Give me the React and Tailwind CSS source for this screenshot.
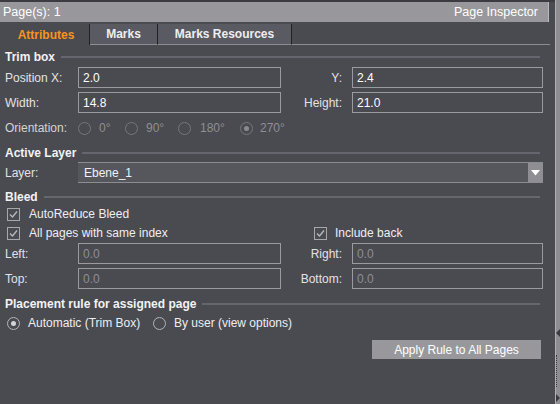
import React from "react";

function Heading({ children, className = "" }) {
  return (
    <div className={`flex items-center gap-[6px] pl-[5px] pr-[15px] h-[14px] ${className}`}>
      <span className="font-bold text-[#f2f2f5] whitespace-nowrap">{children}</span>
      <div className="flex-1 h-[2px] bg-[#66666e]" />
    </div>
  );
}

function Field({ value, dim = false }) {
  return (
    <div
      className={`h-[21px] border border-[#9b9b9f] flex items-center pl-[4px] ${
        dim ? "text-[#8e8e94]" : "text-white"
      }`}
    >
      {value}
    </div>
  );
}

function Radio({ checked = false, disabled = false }) {
  return (
    <span
      className={`w-[13px] h-[13px] rounded-full border flex items-center justify-center shrink-0 ${
        disabled ? "border-[#76767d]" : "border-[#b4b4b8]"
      }`}
    >
      {checked && (
        <span
          className={`w-[5px] h-[5px] rounded-full ${disabled ? "bg-[#8a8a90]" : "bg-[#d4d4d8]"}`}
        />
      )}
    </span>
  );
}

function Check() {
  return (
    <span className="w-[13px] h-[13px] border border-[#a8a8ac] flex items-center justify-center shrink-0">
      <svg width="9" height="9" viewBox="0 0 9 9">
        <path d="M1 4.5 L3.5 7 L8 1.5" fill="none" stroke="#b8b8bc" strokeWidth="1.4" />
      </svg>
    </span>
  );
}

function FieldRow({ l1, v1, l2, v2, dim, className = "" }) {
  return (
    <div className={`flex items-center h-[21px] pl-[5px] ${className}`}>
      <span className="w-[73px] text-[#e2e2e6]">{l1}</span>
      <div className="w-[203px]">
        <Field value={v1} dim={dim} />
      </div>
      <span className="w-[61px] text-right text-[#e2e2e6]">{l2}</span>
      <div className="w-[191px] ml-[10px]">
        <Field value={v2} dim={dim} />
      </div>
    </div>
  );
}

export default function App() {
  return (
    <div className="w-[560px] h-[404px] flex bg-[#4a4a51] font-['Liberation_Sans',Arial,sans-serif] text-[12px] leading-none overflow-hidden">
      <div className="w-[555px] flex flex-col">
        <div className="h-[22px] border-t-2 border-[#3b3b41] flex">
          <div className="w-[549px] bg-[#98989c] border-r border-[#b8b8bc] flex items-center justify-between pl-[3px] pr-[10px] text-white text-[12.5px]">
            <span>Page(s): 1</span>
            <span>Page Inspector</span>
          </div>
        </div>

        <div className="h-[23px] flex items-end pt-[2px]">
          <div className="w-[90px] h-full flex items-center justify-center font-bold text-[#f7941d] border-r border-[#222226] pl-[3px]">
            Attributes
          </div>
          <div className="w-[68px] h-full flex items-center justify-center font-bold text-[#eeeef2] bg-[#5a5a62] border-r border-[#222226] border-b border-b-[#8c8c92]">
            Marks
          </div>
          <div className="w-[134px] h-full flex items-center justify-center font-bold text-[#eeeef2] bg-[#5a5a62] border-r border-[#222226] border-b border-b-[#8c8c92]">
            Marks Resources
          </div>
          <div className="w-[258px] h-full border-b border-[#8c8c92]" />
        </div>

        <Heading className="mt-[5px]">Trim box</Heading>
        <FieldRow l1="Position X:" v1="2.0" l2="Y:" v2="2.4" className="mt-[3px]" />
        <FieldRow l1="Width:" v1="14.8" l2="Height:" v2="21.0" className="mt-[4px]" />

        <div className="flex items-center h-[14px] mt-[8px] pl-[5px] text-[#8e8e94]">
          <span className="w-[73px] text-[#d4d4d8]">Orientation:</span>
          <span className="flex items-center gap-[8px] w-[47px]">
            <Radio disabled />0°
          </span>
          <span className="flex items-center gap-[8px] w-[53px]">
            <Radio disabled />90°
          </span>
          <span className="flex items-center gap-[9px] w-[62px]">
            <Radio disabled />180°
          </span>
          <span className="flex items-center gap-[7px]">
            <Radio disabled checked />270°
          </span>
        </div>

        <Heading className="mt-[11px]">Active Layer</Heading>
        <div className="flex items-center h-[21px] pl-[5px] mt-[2px]">
          <span className="w-[73px] text-[#e2e2e6]">Layer:</span>
          <div className="w-[465px] h-[21px] flex bg-[#56565d] border-y border-[#8c8c92]">
            <span className="flex-1 flex items-center pl-[6px] text-[#f2f2f5]">Ebene_1</span>
            <span className="w-[15px] bg-[#8e8e93] flex items-center justify-center">
              <svg width="9" height="6" viewBox="0 0 9 6">
                <path d="M0 0 H9 L4.5 5.5 Z" fill="#ffffff" />
              </svg>
            </span>
          </div>
        </div>

        <Heading className="mt-[7px]">Bleed</Heading>
        <div className="flex items-center gap-[9px] h-[14px] pl-[7px] mt-[3px] text-[#eeeef2]">
          <Check />
          AutoReduce Bleed
        </div>
        <div className="flex items-center h-[14px] pl-[7px] mt-[5px] text-[#eeeef2]">
          <span className="w-[307px] flex items-center gap-[9px]">
            <Check />
            All pages with same index
          </span>
          <span className="flex items-center gap-[8px]">
            <Check />
            Include back
          </span>
        </div>
        <FieldRow l1="Left:" v1="0.0" l2="Right:" v2="0.0" dim className="mt-[3px]" />
        <FieldRow l1="Top:" v1="0.0" l2="Bottom:" v2="0.0" dim className="mt-[4px]" />

        <Heading className="mt-[8px]">Placement rule for assigned page</Heading>
        <div className="flex items-center h-[14px] pl-[7px] mt-[5px] text-[#eeeef2]">
          <span className="w-[146px] flex items-center gap-[8px]">
            <Radio checked />
            Automatic (Trim Box)
          </span>
          <span className="flex items-center gap-[8px]">
            <Radio />
            By user (view options)
          </span>
        </div>

        <div className="flex justify-end pr-[14px] mt-[10px]">
          <button className="w-[169px] h-[19px] bg-[#98989c] text-white text-[12px] flex items-center justify-center">
            Apply Rule to All Pages
          </button>
        </div>
      </div>

      <div className="flex-1 flex flex-col border-l border-[#b0b0b4] bg-[#8e8e92]">
        <div className="flex-1" />
        <div className="w-0 h-0 border-y-[4px] border-y-transparent border-r-[4px] border-r-[#3a3a40] mb-[18px]" />
        <div className="w-[3px] h-[32px] border-l border-dotted border-[#3a3a40] mb-[7px]" />
        <div className="w-0 h-0 border-y-[4px] border-y-transparent border-l-[4px] border-l-[#3a3a40] mb-[2px]" />
      </div>
    </div>
  );
}
